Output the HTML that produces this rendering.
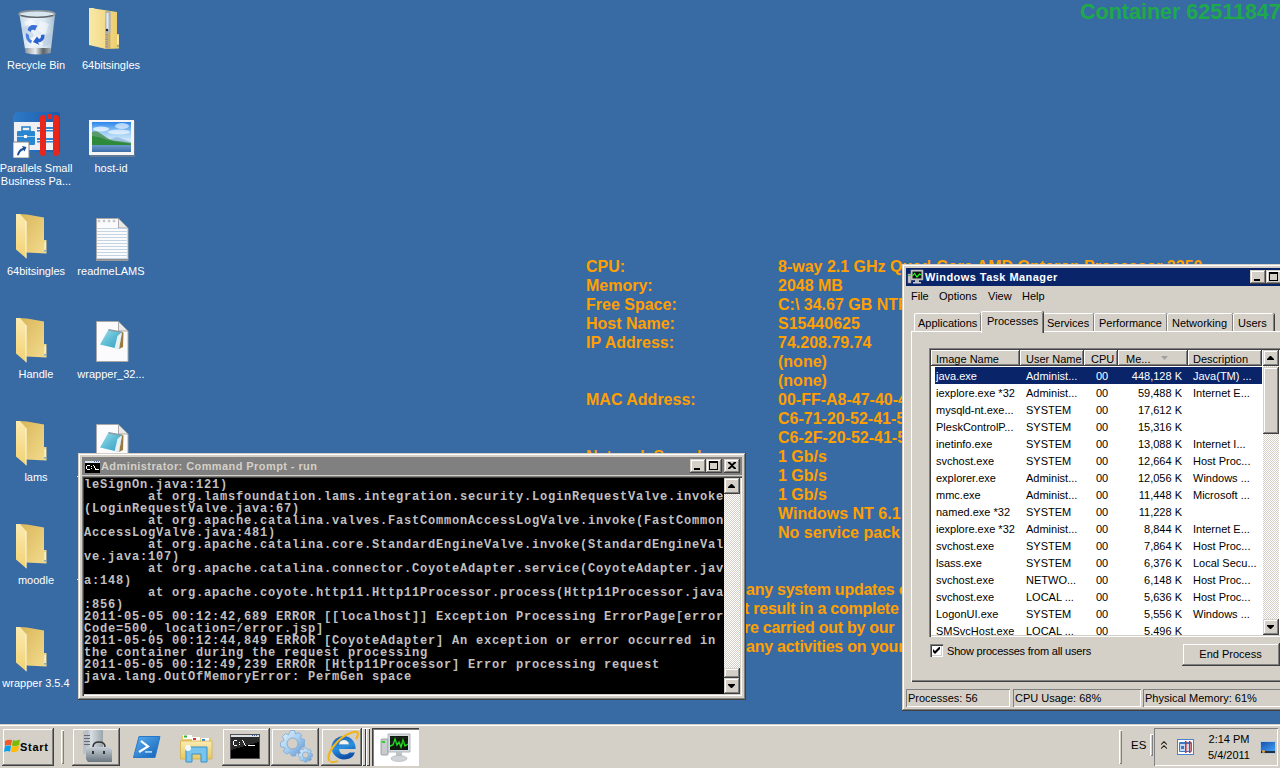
<!DOCTYPE html><html><head><meta charset="utf-8"><style>
*{margin:0;padding:0;box-sizing:border-box}
html,body{width:1280px;height:768px;overflow:hidden}
body{position:relative;background:#386AA4;font-family:"Liberation Sans",sans-serif;font-size:11px;color:#000}
.abs{position:absolute}
.lbl{position:absolute;color:#fff;font-size:11px;line-height:13px;text-align:center;white-space:nowrap}
.bg{position:absolute;color:#FFA000;font-weight:bold;font-size:16px;line-height:19px;white-space:pre}
.con{position:absolute;font-family:"Liberation Mono",monospace;font-weight:bold;font-size:12px;letter-spacing:0.8px;line-height:12px;color:#C0C0C0;white-space:pre}
.raised{background:#D4D0C8;box-shadow:inset -1px -1px #404040,inset 1px 1px #fff,inset -2px -2px #808080}
.raised2{background:#D4D0C8;box-shadow:inset -1px -1px #404040,inset 1px 1px #D4D0C8,inset -2px -2px #808080,inset 2px 2px #fff}
.sunk{box-shadow:inset 1px 1px #808080,inset -1px -1px #fff}
.t{position:absolute;white-space:nowrap;font-size:11px;line-height:13px}
</style></head><body>

<div class="abs" style="left:1080px;top:0px;color:#1EAA4A;font-weight:bold;font-size:21.5px;line-height:24px;white-space:nowrap">Container 62511847</div>
<div class="bg" style="left:586px;top:257px">CPU:</div>
<div class="bg" style="left:778px;top:257px">8-way 2.1 GHz Quad-Core AMD Opteron Processor 2350</div>
<div class="bg" style="left:586px;top:276px">Memory:</div>
<div class="bg" style="left:778px;top:276px">2048 MB</div>
<div class="bg" style="left:586px;top:295px">Free Space:</div>
<div class="bg" style="left:778px;top:295px">C:\ 34.67 GB NTFS</div>
<div class="bg" style="left:586px;top:314px">Host Name:</div>
<div class="bg" style="left:778px;top:314px">S15440625</div>
<div class="bg" style="left:586px;top:333px">IP Address:</div>
<div class="bg" style="left:778px;top:333px">74.208.79.74</div>
<div class="bg" style="left:778px;top:352px">(none)</div>
<div class="bg" style="left:778px;top:371px">(none)</div>
<div class="bg" style="left:586px;top:390px">MAC Address:</div>
<div class="bg" style="left:778px;top:390px">00-FF-A8-47-40-4F</div>
<div class="bg" style="left:778px;top:409px">C6-71-20-52-41-53</div>
<div class="bg" style="left:778px;top:428px">C6-2F-20-52-41-53</div>
<div class="bg" style="left:586px;top:447px">Network Speed:</div>
<div class="bg" style="left:778px;top:447px">1 Gb/s</div>
<div class="bg" style="left:778px;top:466px">1 Gb/s</div>
<div class="bg" style="left:778px;top:485px">1 Gb/s</div>
<div class="bg" style="left:586px;top:504px">OS Version:</div>
<div class="bg" style="left:778px;top:504px">Windows NT 6.1</div>
<div class="bg" style="left:586px;top:523px">Service Pack:</div>
<div class="bg" style="left:778px;top:523px">No service pack</div>
<div class="bg" style="left:746px;top:580px;letter-spacing:-0.25px">any system updates or patches</div>
<div class="bg" style="left:744px;top:599px;letter-spacing:-0.25px">t result in a complete failure</div>
<div class="bg" style="left:744px;top:618px;letter-spacing:-0.25px">re carried out by our</div>
<div class="bg" style="left:746px;top:637px;letter-spacing:-0.25px">any activities on your server</div>
<div class="lbl" style="left:-4px;width:80px;top:59px">Recycle Bin</div>
<div class="lbl" style="left:71px;width:80px;top:59px">64bitsingles</div>
<div class="lbl" style="left:-4px;width:80px;top:162px">Parallels Small<br>Business Pa...</div>
<div class="lbl" style="left:71px;width:80px;top:162px">host-id</div>
<div class="lbl" style="left:-4px;width:80px;top:265px">64bitsingles</div>
<div class="lbl" style="left:71px;width:80px;top:265px">readmeLAMS</div>
<div class="lbl" style="left:-4px;width:80px;top:368px">Handle</div>
<div class="lbl" style="left:71px;width:80px;top:368px">wrapper_32...</div>
<div class="lbl" style="left:-4px;width:80px;top:471px">lams</div>
<div class="lbl" style="left:71px;width:80px;top:471px">wrapper</div>
<div class="lbl" style="left:-4px;width:80px;top:574px">moodle</div>
<div class="lbl" style="left:-4px;width:80px;top:677px">wrapper 3.5.4</div>
<div class="abs" style="left:77px;top:476px;width:1px;height:1px;background:#fff"></div><div class="abs" style="left:77px;top:579px;width:1px;height:1px;background:#fff"></div>
<svg class="abs" style="left:16px;top:213px" width="32" height="46" viewBox="0 0 32 46">
<defs><linearGradient id="fb16213" x1="0" y1="0" x2="1" y2="1"><stop offset="0" stop-color="#D9B65A"/><stop offset="1" stop-color="#F3DC8E"/></linearGradient>
<linearGradient id="ff16213" x1="0" y1="0" x2="0" y2="1"><stop offset="0" stop-color="#FBEBB0"/><stop offset="1" stop-color="#F2D272"/></linearGradient></defs>
<path d="M4 1 L11 1.5 L28 4.5 L28 27 L30.5 27 L30.5 40.5 L10 39.5 Z" fill="url(#fb16213)"/>
<rect x="28.5" y="29" width="1.2" height="9" fill="#fff" opacity="0.8"/><rect x="28.3" y="37" width="1.5" height="1.5" fill="#4A9AE8"/>
<path d="M0 1 L4 1 L10.5 8.5 L10.5 45.5 L0 36.5 Z" fill="url(#ff16213)"/><path d="M9.5 8 L10.5 8.5 L10.5 45.5 L9.5 45z" fill="#fff" opacity="0.7"/></svg>
<svg class="abs" style="left:16px;top:317px" width="32" height="46" viewBox="0 0 32 46">
<defs><linearGradient id="fb16317" x1="0" y1="0" x2="1" y2="1"><stop offset="0" stop-color="#D9B65A"/><stop offset="1" stop-color="#F3DC8E"/></linearGradient>
<linearGradient id="ff16317" x1="0" y1="0" x2="0" y2="1"><stop offset="0" stop-color="#FBEBB0"/><stop offset="1" stop-color="#F2D272"/></linearGradient></defs>
<path d="M4 1 L11 1.5 L28 4.5 L28 27 L30.5 27 L30.5 40.5 L10 39.5 Z" fill="url(#fb16317)"/>
<rect x="28.5" y="29" width="1.2" height="9" fill="#fff" opacity="0.8"/><rect x="28.3" y="37" width="1.5" height="1.5" fill="#4A9AE8"/>
<path d="M0 1 L4 1 L10.5 8.5 L10.5 45.5 L0 36.5 Z" fill="url(#ff16317)"/><path d="M9.5 8 L10.5 8.5 L10.5 45.5 L9.5 45z" fill="#fff" opacity="0.7"/></svg>
<svg class="abs" style="left:16px;top:420px" width="32" height="46" viewBox="0 0 32 46">
<defs><linearGradient id="fb16420" x1="0" y1="0" x2="1" y2="1"><stop offset="0" stop-color="#D9B65A"/><stop offset="1" stop-color="#F3DC8E"/></linearGradient>
<linearGradient id="ff16420" x1="0" y1="0" x2="0" y2="1"><stop offset="0" stop-color="#FBEBB0"/><stop offset="1" stop-color="#F2D272"/></linearGradient></defs>
<path d="M4 1 L11 1.5 L28 4.5 L28 27 L30.5 27 L30.5 40.5 L10 39.5 Z" fill="url(#fb16420)"/>
<rect x="28.5" y="29" width="1.2" height="9" fill="#fff" opacity="0.8"/><rect x="28.3" y="37" width="1.5" height="1.5" fill="#4A9AE8"/>
<path d="M0 1 L4 1 L10.5 8.5 L10.5 45.5 L0 36.5 Z" fill="url(#ff16420)"/><path d="M9.5 8 L10.5 8.5 L10.5 45.5 L9.5 45z" fill="#fff" opacity="0.7"/></svg>
<svg class="abs" style="left:16px;top:523px" width="32" height="46" viewBox="0 0 32 46">
<defs><linearGradient id="fb16523" x1="0" y1="0" x2="1" y2="1"><stop offset="0" stop-color="#D9B65A"/><stop offset="1" stop-color="#F3DC8E"/></linearGradient>
<linearGradient id="ff16523" x1="0" y1="0" x2="0" y2="1"><stop offset="0" stop-color="#FBEBB0"/><stop offset="1" stop-color="#F2D272"/></linearGradient></defs>
<path d="M4 1 L11 1.5 L28 4.5 L28 27 L30.5 27 L30.5 40.5 L10 39.5 Z" fill="url(#fb16523)"/>
<rect x="28.5" y="29" width="1.2" height="9" fill="#fff" opacity="0.8"/><rect x="28.3" y="37" width="1.5" height="1.5" fill="#4A9AE8"/>
<path d="M0 1 L4 1 L10.5 8.5 L10.5 45.5 L0 36.5 Z" fill="url(#ff16523)"/><path d="M9.5 8 L10.5 8.5 L10.5 45.5 L9.5 45z" fill="#fff" opacity="0.7"/></svg>
<svg class="abs" style="left:16px;top:626px" width="32" height="46" viewBox="0 0 32 46">
<defs><linearGradient id="fb16626" x1="0" y1="0" x2="1" y2="1"><stop offset="0" stop-color="#D9B65A"/><stop offset="1" stop-color="#F3DC8E"/></linearGradient>
<linearGradient id="ff16626" x1="0" y1="0" x2="0" y2="1"><stop offset="0" stop-color="#FBEBB0"/><stop offset="1" stop-color="#F2D272"/></linearGradient></defs>
<path d="M4 1 L11 1.5 L28 4.5 L28 27 L30.5 27 L30.5 40.5 L10 39.5 Z" fill="url(#fb16626)"/>
<rect x="28.5" y="29" width="1.2" height="9" fill="#fff" opacity="0.8"/><rect x="28.3" y="37" width="1.5" height="1.5" fill="#4A9AE8"/>
<path d="M0 1 L4 1 L10.5 8.5 L10.5 45.5 L0 36.5 Z" fill="url(#ff16626)"/><path d="M9.5 8 L10.5 8.5 L10.5 45.5 L9.5 45z" fill="#fff" opacity="0.7"/></svg>
<svg class="abs" style="left:89px;top:8px" width="31" height="42" viewBox="0 0 31 42">
<defs><linearGradient id="zf" x1="0" y1="0" x2="1" y2="0"><stop offset="0" stop-color="#F8E8A8"/><stop offset="0.5" stop-color="#F5DC8C"/><stop offset="1" stop-color="#EBCB6A"/></linearGradient></defs>
<path d="M0 0 L5 0 L5 0.5 L28 4 L28 26 L30 26 L30 40.5 L17 41 L0 37z" fill="url(#zf)"/>
<rect x="16.5" y="3" width="5" height="38" fill="#C9B070"/>
<path d="M17.5 14 v26" stroke="#8F949A" stroke-width="2.5" stroke-dasharray="1.2 1.2"/>
<path d="M16.5 4 h5 v20 q-2.5 3 -5 0z" fill="#AAB4C0"/><path d="M17.5 5 h2 v17 h-2z" fill="#E4EAF0"/><circle cx="18" cy="22" r="1.2" fill="#222"/>
<rect x="28.3" y="27.5" width="1.2" height="9" fill="#fff" opacity="0.8"/><rect x="28" y="37" width="1.6" height="1.6" fill="#4A9AE8"/></svg>
<svg class="abs" style="left:18px;top:8px" width="39" height="47" viewBox="0 0 39 47">
<defs><linearGradient id="rb" x1="0" y1="0" x2="1" y2="0"><stop offset="0" stop-color="#C4D6E6"/><stop offset="0.3" stop-color="#EEF4FA"/><stop offset="0.7" stop-color="#DCE8F2"/><stop offset="1" stop-color="#A8BED2"/></linearGradient>
<linearGradient id="rbb" x1="0" y1="0" x2="1" y2="0"><stop offset="0" stop-color="#9098A0"/><stop offset="0.4" stop-color="#E8ECEE"/><stop offset="0.7" stop-color="#5A6268"/><stop offset="1" stop-color="#A8B0B6"/></linearGradient></defs>
<path d="M1.5 7 L37 7 L33 41 L7 41z" fill="url(#rb)"/>
<path d="M6 14 L14 11 L20 19 L12 24z M22 13 L31 16 L27 27 L19 22z M12 30 L22 27 L26 37 L14 38z" fill="#FFFFFF" opacity="0.45"/>
<path d="M4 20 L10 17 L16 28 L9 33z M24 28 L33 25 L32 36 L25 39z" fill="#B0C6DA" opacity="0.5"/>
<path d="M7 40 L33 40 L32.5 45 Q20 48 7.5 45z" fill="url(#rbb)"/>
<ellipse cx="19" cy="6" rx="18" ry="3.2" fill="#D8E6F0" stroke="#8C949A" stroke-width="1.6"/>
<path d="M3 7.5 Q19 11.5 35 7.5" stroke="#5A6066" stroke-width="1.2" fill="none"/>
<path d="M9.5 22 Q11 16.5 16 17 L19.5 17.5 L17 22.5 Q13.5 20.5 12.5 24z" fill="#3A70D8"/>
<path d="M8 25 L11 27 Q10.5 31 14 32.5 L13 35.5 Q6.5 32 8 25z" fill="#4A80E0"/>
<path d="M15 34 L19 28.5 L21 31 Q23.5 30 23 27 L26.5 26.5 Q27 33.5 20 34.5 L21.5 37z" fill="#2A60D0"/></svg>
<svg class="abs" style="left:13px;top:112px" width="48" height="46" viewBox="0 0 48 46">
<defs><linearGradient id="pt" x1="0" y1="0" x2="1" y2="0"><stop offset="0" stop-color="#2E7AC8"/><stop offset="1" stop-color="#1C5CAA"/></linearGradient></defs>
<path d="M2 2 Q2 0 4 0 L45 0 Q47 0 47 2 L47 40 L0 40 L0 4z" fill="url(#pt)"/>
<rect x="1" y="10" width="45" height="28" fill="#F0F0F4"/>
<rect x="4" y="19" width="18" height="14" rx="1" fill="#2A86D0"/><rect x="9" y="15" width="8" height="4" fill="none" stroke="#2A86D0" stroke-width="1.6"/>
<rect x="11" y="23" width="3" height="3" fill="#fff"/><rect x="4" y="24" width="18" height="1" fill="#fff" opacity="0.6"/>
<rect x="24" y="15" width="22" height="2" fill="#2A86D0"/><rect x="24" y="18" width="22" height="1.5" fill="#2A86D0"/><rect x="24" y="26" width="22" height="2" fill="#2A86D0"/><rect x="24" y="29" width="22" height="1.5" fill="#2A86D0"/>
<rect x="27" y="3" width="6" height="41" rx="3" fill="#E8261C"/><rect x="40" y="3" width="6" height="41" rx="3" fill="#E8261C"/><rect x="34.5" y="2" width="4.5" height="5" fill="#E8261C"/>
<rect x="0" y="30" width="16" height="16" fill="#fff" stroke="#888" stroke-width="1"/><path d="M4 13.5 Q5 7 10 6 L9 4 L13.5 5 L11.5 9.5 L10.5 8 Q7 9 6 13z" transform="translate(0,30)" fill="#1A4E9A"/></svg>
<svg class="abs" style="left:89px;top:120px" width="46" height="37" viewBox="0 0 46 37">
<defs><linearGradient id="sky" x1="0" y1="0" x2="0" y2="1"><stop offset="0" stop-color="#2A86EC"/><stop offset="0.35" stop-color="#9CCCF4"/><stop offset="0.7" stop-color="#E4F2FC"/></linearGradient>
<linearGradient id="sea" x1="0" y1="0" x2="0" y2="1"><stop offset="0" stop-color="#6A98CC"/><stop offset="1" stop-color="#3E6EA8"/></linearGradient></defs>
<rect x="1" y="1" width="45" height="36" fill="#8A8A8A" opacity="0.5"/>
<rect x="0" y="0" width="45" height="35" fill="#F6F4F4"/>
<rect x="3" y="2" width="39" height="30" fill="url(#sky)"/>
<ellipse cx="12" cy="9" rx="8" ry="2.5" fill="#fff" opacity="0.7"/><ellipse cx="33" cy="6" rx="7" ry="3" fill="#fff" opacity="0.6"/><ellipse cx="30" cy="12" rx="11" ry="2.5" fill="#fff" opacity="0.6"/>
<path d="M22 19 L28 17 L36 20 L42 22 L42 25 L22 25z" fill="#9CC0E0"/>
<path d="M3 12 Q7 10.5 9 12 Q14 15 19 18.5 L24 20.5 Q32 21 42 23 L42 25.5 L3 25.5z" fill="#5A9A6A"/>
<path d="M3 16 Q12 17 18 20 Q30 22 42 23.5 L42 25.5 L3 25.5z" fill="#2E8A3A"/>
<rect x="3" y="25" width="39" height="7" fill="url(#sea)"/></svg>
<svg class="abs" style="left:96px;top:218px" width="33" height="43" viewBox="0 0 33 43"><path d="M0.5 0.5 L22.5 0.5 L32 10 L32 42.5 L0.5 42.5z" fill="#FBFBFD" stroke="#A8A8A8" stroke-width="1"/><path d="M22.5 0.5 L22.5 10 L32 10z" fill="#E8E8E8" stroke="#999" stroke-width="0.8"/><rect x="1" y="10" width="30.5" height="1" fill="#C4D4E2"/><rect x="1" y="13" width="30.5" height="1" fill="#C4D4E2"/><rect x="1" y="16" width="30.5" height="1" fill="#C4D4E2"/><rect x="1" y="19" width="30.5" height="1" fill="#C4D4E2"/><rect x="1" y="22" width="30.5" height="1" fill="#C4D4E2"/><rect x="1" y="25" width="30.5" height="1" fill="#C4D4E2"/><rect x="1" y="28" width="30.5" height="1" fill="#C4D4E2"/><rect x="1" y="31" width="30.5" height="1" fill="#C4D4E2"/><rect x="1" y="34" width="30.5" height="1" fill="#C4D4E2"/><rect x="1" y="37" width="30.5" height="1" fill="#C4D4E2"/><rect x="1" y="40" width="30.5" height="1" fill="#C4D4E2"/><rect x="0.5" y="41" width="31.5" height="1.5" fill="#909090"/><circle cx="3" cy="3" r="1" fill="none" stroke="#999" stroke-width="0.6"/><circle cx="8" cy="3" r="1" fill="none" stroke="#999" stroke-width="0.6"/><circle cx="13" cy="3" r="1" fill="none" stroke="#999" stroke-width="0.6"/><circle cx="18" cy="3" r="1" fill="none" stroke="#999" stroke-width="0.6"/></svg>
<svg class="abs" style="left:96px;top:321px" width="33" height="41" viewBox="0 0 33 41"><path d="M0.5 0.5 L22.5 0.5 L32 10 L32 40.5 L0.5 40.5z" fill="#FBFBFD" stroke="#A8A8A8" stroke-width="1"/><path d="M22.5 0.5 L22.5 10 L32 10z" fill="#E8E8E8" stroke="#999" stroke-width="0.8"/><defs><linearGradient id="pd96321" x1="0" y1="0" x2="1" y2="1"><stop offset="0" stop-color="#A8E0EC"/><stop offset="0.5" stop-color="#5CBCD4"/><stop offset="1" stop-color="#3A9CC0"/></linearGradient></defs><path d="M12.5 8.5 L26 11 L23 28 L4 23.5z" fill="url(#pd96321)"/><path d="M26 11 L27.5 11.5 L27 26 L23 28z" fill="#9C7A3C"/><path d="M21.5 15 L26 11 L23 28 L18.5 27.5z" fill="#E8F0F4"/><path d="M12.5 8 L26 10.5 L26 12 L12.5 9.5z" fill="#8A9AA0"/></svg>
<svg class="abs" style="left:96px;top:424px" width="33" height="41" viewBox="0 0 33 41"><path d="M0.5 0.5 L22.5 0.5 L32 10 L32 40.5 L0.5 40.5z" fill="#FBFBFD" stroke="#A8A8A8" stroke-width="1"/><path d="M22.5 0.5 L22.5 10 L32 10z" fill="#E8E8E8" stroke="#999" stroke-width="0.8"/><defs><linearGradient id="pd96424" x1="0" y1="0" x2="1" y2="1"><stop offset="0" stop-color="#A8E0EC"/><stop offset="0.5" stop-color="#5CBCD4"/><stop offset="1" stop-color="#3A9CC0"/></linearGradient></defs><path d="M12.5 8.5 L26 11 L23 28 L4 23.5z" fill="url(#pd96424)"/><path d="M26 11 L27.5 11.5 L27 26 L23 28z" fill="#9C7A3C"/><path d="M21.5 15 L26 11 L23 28 L18.5 27.5z" fill="#E8F0F4"/><path d="M12.5 8 L26 10.5 L26 12 L12.5 9.5z" fill="#8A9AA0"/></svg>
<div class="abs raised2" style="left:78px;top:453px;width:668px;height:247px"></div>
<div class="abs" style="left:82px;top:457px;width:660px;height:18px;background:#808080"></div>
<div class="t" style="left:101px;top:460px;color:#D4D0C8;font-weight:bold;line-height:13px;letter-spacing:0.42px">Administrator: Command Prompt - run</div>
<svg class="abs" style="left:85px;top:461px" width="15" height="12" viewBox="0 0 15 12" shape-rendering="crispEdges">
<rect x="0" y="0" width="15" height="12" fill="#000"/><rect x="0" y="0" width="15" height="2" fill="#D8E2EE"/>
<rect x="9" y="0" width="1" height="1" fill="#5070B0"/><rect x="11" y="0" width="1" height="1" fill="#5070B0"/><rect x="13" y="0" width="1" height="1" fill="#5070B0"/>
<path d="M2 4h3v1H2zM1 5h1v3H1zM2 8h3v1H2zM6 5h1v1H6zM6 7h1v1H6zM8 4h1v1H8zM9 5h1v2H9zM10 7h1v2h-1zM11 8h3v1h-3z" fill="#fff"/></svg>
<div class="abs raised2" style="left:690px;top:459px;width:16px;height:14px"><div class="abs" style="left:4px;top:9px;width:6px;height:2px;background:#000"></div></div>
<div class="abs raised2" style="left:706px;top:459px;width:16px;height:14px"><div class="abs" style="left:3px;top:2px;width:9px;height:9px;border:1px solid #000;border-top-width:2px"></div></div>
<div class="abs raised2" style="left:724px;top:459px;width:16px;height:14px"><svg class="abs" style="left:4px;top:3px" width="8" height="7" viewBox="0 0 8 7"><path d="M0 0h2l2 2 2-2h2v1L5 3.5 8 6v1H6L4 5 2 7H0V6l3-2.5L0 1z" fill="#000"/></svg></div>
<div class="abs" style="left:82px;top:476px;width:660px;height:220px;box-shadow:inset 1px 1px #808080,inset 2px 2px #404040,inset -1px -1px #fff,inset -2px -2px #D4D0C8;background:#000"></div>
<div class="abs" style="left:84px;top:478px;width:640px;height:216px;overflow:hidden">
<div class="con" style="left:0;top:1px">leSignOn.java:121)
        at org.lamsfoundation.lams.integration.security.LoginRequestValve.invoke
(LoginRequestValve.java:67)
        at org.apache.catalina.valves.FastCommonAccessLogValve.invoke(FastCommon
AccessLogValve.java:481)
        at org.apache.catalina.core.StandardEngineValve.invoke(StandardEngineVal
ve.java:107)
        at org.apache.catalina.connector.CoyoteAdapter.service(CoyoteAdapter.jav
a:148)
        at org.apache.coyote.http11.Http11Processor.process(Http11Processor.java
:856)
2011-05-05 00:12:42,689 ERROR [[localhost]] Exception Processing ErrorPage[error
Code=500, location=/error.jsp]
2011-05-05 00:12:44,849 ERROR [CoyoteAdapter] An exception or error occurred in
the container during the request processing
2011-05-05 00:12:49,239 ERROR [Http11Processor] Error processing request
java.lang.OutOfMemoryError: PermGen space</div></div>
<div class="abs" style="left:724px;top:478px;width:16px;height:216px;background-color:#fff;background-image:linear-gradient(45deg,#D4D0C8 25%,transparent 25%,transparent 75%,#D4D0C8 75%),linear-gradient(45deg,#D4D0C8 25%,transparent 25%,transparent 75%,#D4D0C8 75%);background-size:2px 2px;background-position:0 0,1px 1px"></div><div class="abs raised2" style="left:724px;top:478px;width:16px;height:16px"><svg class="abs" style="left:4px;top:6px" width="7" height="4" viewBox="0 0 7 4"><path d="M3 0h1l3 3v1H0V3z" fill="#000"/></svg></div><div class="abs raised2" style="left:724px;top:678px;width:16px;height:16px"><svg class="abs" style="left:4px;top:6px" width="7" height="4" viewBox="0 0 7 4"><path d="M0 0h7v1L4 4H3L0 1z" fill="#000"/></svg></div><div class="abs raised2" style="left:724px;top:668px;width:16px;height:10px"></div>
<div class="abs raised2" style="left:902px;top:264px;width:390px;height:447px"></div>
<div class="abs" style="left:906px;top:268px;width:380px;height:18px;background:#0A246A"></div>
<div class="t" style="left:925px;top:271px;color:#fff;font-weight:bold;letter-spacing:0.45px">Windows Task Manager</div>
<svg class="abs" style="left:907px;top:269px" width="17" height="16" viewBox="0 0 17 16">
<rect x="1" y="5" width="3" height="9" fill="#C8C8C8" stroke="#888" stroke-width="0.5"/><rect x="1.5" y="6" width="2" height="1" fill="#3c3"/>
<rect x="4" y="1" width="12" height="10" fill="#D0D0D0" stroke="#999" stroke-width="0.6"/><rect x="5.5" y="2.5" width="9" height="7" fill="#111"/>
<path d="M5.5 7 L7.5 4.5 L10 8 L12.5 5 L14.5 6" stroke="#2f2" stroke-width="1.2" fill="none"/>
<rect x="8" y="11" width="4" height="2" fill="#bbb"/><rect x="6" y="13" width="8" height="1.5" fill="#ccc"/></svg>
<div class="abs raised2" style="left:1250px;top:270px;width:16px;height:14px"><div class="abs" style="left:4px;top:9px;width:6px;height:2px;background:#000"></div></div>
<div class="abs raised2" style="left:1266px;top:270px;width:16px;height:14px"><div class="abs" style="left:3px;top:2px;width:9px;height:9px;border:1px solid #000;border-top-width:2px"></div></div>
<div class="t" style="left:911px;top:290px">File</div>
<div class="t" style="left:939px;top:290px">Options</div>
<div class="t" style="left:988px;top:290px">View</div>
<div class="t" style="left:1022px;top:290px">Help</div>
<div class="abs" style="left:911px;top:331px;width:380px;height:351px;box-shadow:inset 1px 1px #fff,inset -1px -1px #404040,inset -2px -2px #808080"></div>
<div class="abs" style="left:914px;top:313px;width:67px;height:18px;background:#D4D0C8;border-left:1px solid #fff;border-top:1px solid #fff;box-shadow:inset -1px 0 #808080,1px 0 #404040;border-radius:2px 2px 0 0"></div>
<div class="t" style="left:918px;top:317px">Applications</div>
<div class="abs" style="left:1043px;top:313px;width:51px;height:18px;background:#D4D0C8;border-left:1px solid #fff;border-top:1px solid #fff;box-shadow:inset -1px 0 #808080,1px 0 #404040;border-radius:2px 2px 0 0"></div>
<div class="t" style="left:1047px;top:317px">Services</div>
<div class="abs" style="left:1094px;top:313px;width:73px;height:18px;background:#D4D0C8;border-left:1px solid #fff;border-top:1px solid #fff;box-shadow:inset -1px 0 #808080,1px 0 #404040;border-radius:2px 2px 0 0"></div>
<div class="t" style="left:1099px;top:317px">Performance</div>
<div class="abs" style="left:1167px;top:313px;width:66px;height:18px;background:#D4D0C8;border-left:1px solid #fff;border-top:1px solid #fff;box-shadow:inset -1px 0 #808080,1px 0 #404040;border-radius:2px 2px 0 0"></div>
<div class="t" style="left:1172px;top:317px">Networking</div>
<div class="abs" style="left:1233px;top:313px;width:41px;height:18px;background:#D4D0C8;border-left:1px solid #fff;border-top:1px solid #fff;box-shadow:inset -1px 0 #808080,1px 0 #404040;border-radius:2px 2px 0 0"></div>
<div class="t" style="left:1238px;top:317px">Users</div>
<div class="abs" style="left:981px;top:311px;width:62px;height:22px;background:#D4D0C8;border-left:1px solid #fff;border-top:1px solid #fff;box-shadow:inset -1px 0 #808080,1px 0 #404040;border-radius:2px 2px 0 0"></div>
<div class="t" style="left:987px;top:315px">Processes</div>
<div class="abs" style="left:929px;top:348px;width:360px;height:289px;background:#fff;box-shadow:inset 1px 1px #808080,inset 2px 2px #404040,inset -1px -1px #fff,inset -2px -2px #D4D0C8"></div>
<div class="abs raised" style="left:931px;top:350px;width:89px;height:16px"></div>
<div class="t" style="left:936px;top:353px">Image Name</div>
<div class="abs raised" style="left:1020px;top:350px;width:64px;height:16px"></div>
<div class="t" style="left:1026px;top:353px">User Name</div>
<div class="abs raised" style="left:1084px;top:350px;width:34px;height:16px"></div>
<div class="t" style="left:1091px;top:353px">CPU</div>
<div class="abs raised" style="left:1118px;top:350px;width:70px;height:16px"></div>
<div class="t" style="left:1126px;top:353px">Me...</div>
<div class="abs raised" style="left:1188px;top:350px;width:74px;height:16px"></div>
<div class="t" style="left:1193px;top:353px">Description</div>
<svg class="abs" style="left:1161px;top:356px" width="7" height="4" viewBox="0 0 7 4"><path d="M0 0h7L3.5 4z" fill="#A0A0A0"/></svg>
<div class="abs" style="left:932px;top:367px;width:330px;height:268px;overflow:hidden">
<div class="abs" style="left:3px;top:0px;width:327px;height:17px;background:#0A246A"></div>
<div class="t" style="left:4px;top:3px;color:#fff">java.exe</div>
<div class="t" style="left:94px;top:3px;color:#fff">Administ...</div>
<div class="t" style="left:164px;top:3px;color:#fff">00</div>
<div class="t" style="left:180px;width:70px;text-align:right;top:3px;color:#fff">448,128 K</div>
<div class="t" style="left:261px;top:3px;color:#fff">Java(TM) ...</div>
<div class="t" style="left:4px;top:20px;color:#000">iexplore.exe *32</div>
<div class="t" style="left:94px;top:20px;color:#000">Administ...</div>
<div class="t" style="left:164px;top:20px;color:#000">00</div>
<div class="t" style="left:180px;width:70px;text-align:right;top:20px;color:#000">59,488 K</div>
<div class="t" style="left:261px;top:20px;color:#000">Internet E...</div>
<div class="t" style="left:4px;top:37px;color:#000">mysqld-nt.exe...</div>
<div class="t" style="left:94px;top:37px;color:#000">SYSTEM</div>
<div class="t" style="left:164px;top:37px;color:#000">00</div>
<div class="t" style="left:180px;width:70px;text-align:right;top:37px;color:#000">17,612 K</div>
<div class="t" style="left:261px;top:37px;color:#000"></div>
<div class="t" style="left:4px;top:54px;color:#000">PleskControlP...</div>
<div class="t" style="left:94px;top:54px;color:#000">SYSTEM</div>
<div class="t" style="left:164px;top:54px;color:#000">00</div>
<div class="t" style="left:180px;width:70px;text-align:right;top:54px;color:#000">15,316 K</div>
<div class="t" style="left:261px;top:54px;color:#000"></div>
<div class="t" style="left:4px;top:71px;color:#000">inetinfo.exe</div>
<div class="t" style="left:94px;top:71px;color:#000">SYSTEM</div>
<div class="t" style="left:164px;top:71px;color:#000">00</div>
<div class="t" style="left:180px;width:70px;text-align:right;top:71px;color:#000">13,088 K</div>
<div class="t" style="left:261px;top:71px;color:#000">Internet I...</div>
<div class="t" style="left:4px;top:88px;color:#000">svchost.exe</div>
<div class="t" style="left:94px;top:88px;color:#000">SYSTEM</div>
<div class="t" style="left:164px;top:88px;color:#000">00</div>
<div class="t" style="left:180px;width:70px;text-align:right;top:88px;color:#000">12,664 K</div>
<div class="t" style="left:261px;top:88px;color:#000">Host Proc...</div>
<div class="t" style="left:4px;top:105px;color:#000">explorer.exe</div>
<div class="t" style="left:94px;top:105px;color:#000">Administ...</div>
<div class="t" style="left:164px;top:105px;color:#000">00</div>
<div class="t" style="left:180px;width:70px;text-align:right;top:105px;color:#000">12,056 K</div>
<div class="t" style="left:261px;top:105px;color:#000">Windows ...</div>
<div class="t" style="left:4px;top:122px;color:#000">mmc.exe</div>
<div class="t" style="left:94px;top:122px;color:#000">Administ...</div>
<div class="t" style="left:164px;top:122px;color:#000">00</div>
<div class="t" style="left:180px;width:70px;text-align:right;top:122px;color:#000">11,448 K</div>
<div class="t" style="left:261px;top:122px;color:#000">Microsoft ...</div>
<div class="t" style="left:4px;top:139px;color:#000">named.exe *32</div>
<div class="t" style="left:94px;top:139px;color:#000">SYSTEM</div>
<div class="t" style="left:164px;top:139px;color:#000">00</div>
<div class="t" style="left:180px;width:70px;text-align:right;top:139px;color:#000">11,228 K</div>
<div class="t" style="left:261px;top:139px;color:#000"></div>
<div class="t" style="left:4px;top:156px;color:#000">iexplore.exe *32</div>
<div class="t" style="left:94px;top:156px;color:#000">Administ...</div>
<div class="t" style="left:164px;top:156px;color:#000">00</div>
<div class="t" style="left:180px;width:70px;text-align:right;top:156px;color:#000">8,844 K</div>
<div class="t" style="left:261px;top:156px;color:#000">Internet E...</div>
<div class="t" style="left:4px;top:173px;color:#000">svchost.exe</div>
<div class="t" style="left:94px;top:173px;color:#000">SYSTEM</div>
<div class="t" style="left:164px;top:173px;color:#000">00</div>
<div class="t" style="left:180px;width:70px;text-align:right;top:173px;color:#000">7,864 K</div>
<div class="t" style="left:261px;top:173px;color:#000">Host Proc...</div>
<div class="t" style="left:4px;top:190px;color:#000">lsass.exe</div>
<div class="t" style="left:94px;top:190px;color:#000">SYSTEM</div>
<div class="t" style="left:164px;top:190px;color:#000">00</div>
<div class="t" style="left:180px;width:70px;text-align:right;top:190px;color:#000">6,376 K</div>
<div class="t" style="left:261px;top:190px;color:#000">Local Secu...</div>
<div class="t" style="left:4px;top:207px;color:#000">svchost.exe</div>
<div class="t" style="left:94px;top:207px;color:#000">NETWO...</div>
<div class="t" style="left:164px;top:207px;color:#000">00</div>
<div class="t" style="left:180px;width:70px;text-align:right;top:207px;color:#000">6,148 K</div>
<div class="t" style="left:261px;top:207px;color:#000">Host Proc...</div>
<div class="t" style="left:4px;top:224px;color:#000">svchost.exe</div>
<div class="t" style="left:94px;top:224px;color:#000">LOCAL ...</div>
<div class="t" style="left:164px;top:224px;color:#000">00</div>
<div class="t" style="left:180px;width:70px;text-align:right;top:224px;color:#000">5,636 K</div>
<div class="t" style="left:261px;top:224px;color:#000">Host Proc...</div>
<div class="t" style="left:4px;top:241px;color:#000">LogonUI.exe</div>
<div class="t" style="left:94px;top:241px;color:#000">SYSTEM</div>
<div class="t" style="left:164px;top:241px;color:#000">00</div>
<div class="t" style="left:180px;width:70px;text-align:right;top:241px;color:#000">5,556 K</div>
<div class="t" style="left:261px;top:241px;color:#000">Windows ...</div>
<div class="t" style="left:4px;top:258px;color:#000">SMSvcHost.exe</div>
<div class="t" style="left:94px;top:258px;color:#000">LOCAL ...</div>
<div class="t" style="left:164px;top:258px;color:#000">00</div>
<div class="t" style="left:180px;width:70px;text-align:right;top:258px;color:#000">5,496 K</div>
<div class="t" style="left:261px;top:258px;color:#000"></div>
</div>
<div class="abs" style="left:1263px;top:350px;width:16px;height:285px;background-color:#fff;background-image:linear-gradient(45deg,#D4D0C8 25%,transparent 25%,transparent 75%,#D4D0C8 75%),linear-gradient(45deg,#D4D0C8 25%,transparent 25%,transparent 75%,#D4D0C8 75%);background-size:2px 2px;background-position:0 0,1px 1px"></div><div class="abs raised2" style="left:1263px;top:350px;width:16px;height:16px"><svg class="abs" style="left:4px;top:6px" width="7" height="4" viewBox="0 0 7 4"><path d="M3 0h1l3 3v1H0V3z" fill="#000"/></svg></div><div class="abs raised2" style="left:1263px;top:619px;width:16px;height:16px"><svg class="abs" style="left:4px;top:6px" width="7" height="4" viewBox="0 0 7 4"><path d="M0 0h7v1L4 4H3L0 1z" fill="#000"/></svg></div><div class="abs raised2" style="left:1263px;top:367px;width:16px;height:67px"></div>
<div class="abs" style="left:930px;top:644px;width:13px;height:13px;background:#fff;box-shadow:inset 1px 1px #808080,inset 2px 2px #404040,inset -1px -1px #fff,inset -2px -2px #D4D0C8"></div>
<svg class="abs" style="left:933px;top:647px" width="7" height="7" viewBox="0 0 7 7"><path d="M0 2v3l2 2 5-5V-1L2 4z" fill="#000"/></svg>
<div class="t" style="left:947px;top:645px;letter-spacing:-0.2px">Show processes from all users</div>
<div class="abs raised2" style="left:1182px;top:643px;width:98px;height:23px"></div>
<div class="t" style="left:1182px;width:97px;text-align:center;top:648px">End Process</div>
<div class="abs sunk" style="left:906px;top:689px;width:104px;height:18px"></div>
<div class="t" style="left:908px;top:692px">Processes: 56</div>
<div class="abs sunk" style="left:1013px;top:689px;width:128px;height:18px"></div>
<div class="t" style="left:1015px;top:692px">CPU Usage: 68%</div>
<div class="abs sunk" style="left:1143px;top:689px;width:147px;height:18px"></div>
<div class="t" style="left:1145px;top:692px">Physical Memory: 61%</div>
<div class="abs" style="left:0;top:724px;width:1280px;height:44px;background:#D4D0C8;box-shadow:inset 0 1px #D4D0C8,inset 0 2px #fff"></div>
<div class="abs raised2" style="left:2px;top:728px;width:52px;height:38px"></div>
<svg class="abs" style="left:4px;top:738px" width="17" height="16" viewBox="0 0 17 16">
<path d="M1 3 Q4 1 8 2 L7 7.5 Q4 6.5 1 8z" fill="#F05A28"/><path d="M9 2 Q12 3.5 16 1.5 L15 7 Q11 9 8 7.5z" fill="#7CBB00"/>
<path d="M1 8.5 Q4 7 7 8 L6 13.5 Q3 12.5 0 14z" fill="#00A1F1"/><path d="M8 8 Q11 9.5 15 7.5 L14 13 Q10 15 7 13.5z" fill="#FFBB00"/></svg>
<div class="t" style="left:20px;top:741px;font-weight:bold;font-size:11px;letter-spacing:0.7px">Start</div>
<div class="abs" style="left:61px;top:730px;width:3px;height:34px;box-shadow:inset 1px 1px #fff,inset -1px -1px #808080"></div>
<div class="abs raised2" style="left:72px;top:728px;width:48px;height:38px"></div>
<div class="abs raised2" style="left:222px;top:728px;width:48px;height:38px"></div>
<div class="abs raised2" style="left:271px;top:728px;width:48px;height:38px"></div>
<div class="abs raised2" style="left:321px;top:728px;width:41px;height:38px"></div>
<div class="abs" style="left:362px;top:728px;width:4px;height:38px;box-shadow:inset 1px 1px #fff,inset -1px -1px #404040"></div>
<div class="abs" style="left:366px;top:728px;width:4px;height:38px;box-shadow:inset 1px 1px #fff,inset -1px -1px #404040"></div>
<div class="abs" style="left:372px;top:728px;width:47px;height:38px;background:#fff;box-shadow:inset 1px 1px #404040,inset 2px 2px #808080,inset -1px -1px #fff"></div>
<div class="abs" style="left:1119px;top:730px;width:3px;height:34px;box-shadow:inset 1px 1px #fff,inset -1px -1px #808080"></div>
<div class="abs" style="left:1150px;top:734px;width:3px;height:22px;box-shadow:inset 1px 1px #fff,inset -1px -1px #808080"></div>
<div class="t" style="left:1131px;top:739px;font-size:11.5px">ES</div>
<div class="abs" style="left:1154px;top:728px;width:124px;height:38px;box-shadow:inset 1px 1px #808080,inset -1px -1px #fff"></div>
<svg class="abs" style="left:1161px;top:741px" width="6" height="8" viewBox="0 0 6 8"><path d="M0 3l3-3 3 3v1L3 1.5 0 4zM0 7l3-3 3 3v1L3 5.5 0 8z" fill="#000"/></svg>
<div class="t" style="left:1200px;width:58px;text-align:center;top:733px">2:14 PM</div>
<div class="t" style="left:1200px;width:58px;text-align:center;top:749px">5/4/2011</div>
<svg class="abs" style="left:82px;top:730px" width="32" height="34" viewBox="0 0 32 34">
<defs><linearGradient id="srv" x1="0" y1="0" x2="1" y2="0"><stop offset="0" stop-color="#8A949C"/><stop offset="0.4" stop-color="#D8DEE2"/><stop offset="1" stop-color="#9AA4AC"/></linearGradient>
<linearGradient id="tbx" x1="0" y1="0" x2="0" y2="1"><stop offset="0" stop-color="#C8D0D8"/><stop offset="1" stop-color="#6A7680"/></linearGradient></defs>
<path d="M1 2 L5 0 L21 0 L21 22 L1 24z" fill="url(#srv)"/><path d="M1 2 L5 0 L5 24 L1 24z" fill="#B8C0C8"/>
<rect x="2" y="5" width="6" height="1" fill="#667"/><rect x="2" y="8" width="6" height="1" fill="#667"/><rect x="2" y="11" width="6" height="1" fill="#667"/><rect x="2" y="14" width="6" height="1" fill="#667"/>
<path d="M4 17 L28 17 L30 20 L30 32 L6 32 L4 29z" fill="url(#tbx)"/><path d="M11 17 Q11 12 17 12 Q23 12 23 17" stroke="#333" stroke-width="1.5" fill="none"/>
<rect x="10" y="21" width="2" height="3" fill="#333"/><rect x="21" y="21" width="2" height="3" fill="#333"/></svg>
<svg class="abs" style="left:133px;top:736px" width="28" height="22" viewBox="0 0 28 22">
<defs><linearGradient id="ps" x1="0" y1="0" x2="1" y2="1"><stop offset="0" stop-color="#5CB0F0"/><stop offset="1" stop-color="#1060B8"/></linearGradient></defs>
<path d="M6 0.5 L27 0.5 L22 21.5 L0.5 21.5z" fill="url(#ps)" stroke="#2878C8" stroke-width="1"/>
<path d="M8 5 L15 10.5 L6 16" stroke="#fff" stroke-width="2.2" fill="none"/><rect x="12" y="15" width="7" height="1.8" fill="#A8D4F4"/></svg>
<svg class="abs" style="left:180px;top:733px" width="33" height="30" viewBox="0 0 33 30">
<defs><linearGradient id="fe" x1="0" y1="0" x2="0" y2="1"><stop offset="0" stop-color="#FBEBB0"/><stop offset="1" stop-color="#E8C860"/></linearGradient></defs>
<path d="M1 3 L11 3 L13 5 L31 5 L31 25 L1 25z" fill="#E8C870"/><rect x="3" y="2" width="9" height="4" fill="#fff"/><rect x="4" y="2.5" width="3" height="2" fill="#2CB82C"/>
<rect x="12" y="4" width="8" height="4" fill="#fff"/><rect x="13" y="5" width="3" height="2" fill="#E03030"/><rect x="21" y="5" width="8" height="4" fill="#fff"/><rect x="22" y="6" width="3" height="2" fill="#2080E0"/>
<path d="M0.5 8 L32 8 L32 26 L0.5 26z" fill="url(#fe)" stroke="#D0B050" stroke-width="0.8"/>
<path d="M6 14 L27 14 L27 29 L21 29 L21 21 L12 21 L12 29 L6 29z" fill="#78C4EC" stroke="#3890C8" stroke-width="1"/><circle cx="8" cy="15" r="3" fill="#fff" opacity="0.9"/></svg>
<svg class="abs" style="left:230px;top:734px" width="30" height="25" viewBox="0 0 30 25" shape-rendering="crispEdges">
<rect x="0" y="0" width="30" height="25" fill="#505050"/><rect x="1" y="1" width="28" height="23" fill="#000"/><rect x="1" y="1" width="28" height="2" fill="#DDE2E8"/>
<rect x="22" y="1" width="1" height="1" fill="#4060A0"/><rect x="24" y="1" width="1" height="1" fill="#4060A0"/><rect x="26" y="1" width="1" height="1" fill="#4060A0"/>
<path d="M1 3h28v5 L1 16z" fill="#2A2A2A"/>
<path d="M4 6h3v1H4zM3 7h1v4H3zM4 11h3v1H4zM9 8h1v1H9zM9 10h1v1H9zM12 6h1v1h-1zM13 7h1v2h-1zM14 9h1v2h-1zM15 11h1v1h-1zM18 11h7v1h-7z" fill="#fff"/></svg>
<svg class="abs" style="left:278px;top:730px" width="38" height="34" viewBox="0 0 38 34">
<defs><linearGradient id="gr" x1="0" y1="0" x2="1" y2="1"><stop offset="0" stop-color="#E8F4FC"/><stop offset="0.5" stop-color="#A8D0F0"/><stop offset="1" stop-color="#5A90D0"/></linearGradient></defs>
<g transform="translate(14.5,13.5)"><path d="M-2 -13 L2 -13 L3 -9.5 L6.5 -11 L9 -8.5 L8 -5 L12 -4 L12 0 L12 3 L8.5 4.5 L10 8 L7.5 10.5 L4 9 L3 12.5 L-1 12.5 L-2.5 9 L-6 10.5 L-9 8 L-7.5 4.5 L-12 3 L-12 -1 L-8.5 -3 L-10 -7 L-7 -10 L-4 -8.5z" fill="url(#gr)" stroke="#7EA8D8" stroke-width="0.8"/><circle r="5.5" fill="#D4D0C8" stroke="#88AAD0" stroke-width="1"/></g>
<g transform="translate(27.5,25)"><path d="M-1.5 -7 L1.5 -7 L2 -5 L4.5 -6 L6 -4 L5 -2 L7 -1 L7 1.5 L5 2.5 L6 4.5 L4 6 L2 5 L1.5 7 L-1.5 7 L-2 5 L-4.5 6 L-6 4 L-5 2.5 L-7 1.5 L-7 -1 L-5 -2 L-6 -4 L-4 -6 L-2 -5z" fill="url(#gr)" stroke="#7EA8D8" stroke-width="0.6"/><circle r="3" fill="#D4D0C8" stroke="#88AAD0" stroke-width="0.8"/></g></svg>
<svg class="abs" style="left:327px;top:730px" width="33" height="34" viewBox="0 0 33 34">
<defs><linearGradient id="ie" x1="0" y1="0" x2="0.3" y2="1"><stop offset="0" stop-color="#1A5AB0"/><stop offset="0.55" stop-color="#2A90E0"/><stop offset="1" stop-color="#0E50A8"/></linearGradient></defs>
<path d="M4.5 17 A12 12 0 1 1 28.5 19 L12 19 Q12.5 24.5 17.5 24.5 Q21 24.5 22.5 22.5 L28 22.5 Q25.5 29.5 17 29.5 A12.5 12.5 0 0 1 4.5 17z M12 14.5 L22 14.5 Q21.5 10 17 10 Q12.5 10 12 14.5z" fill="url(#ie)" fill-rule="evenodd"/>
<path d="M12.5 14 Q13 10.5 17 10.5 Q21 10.5 21.5 14z" fill="#F4F4F4"/>
<path d="M2.5 31 Q-0.5 26 6 17 Q14 6 25 2.5 Q31 0.5 31 4 Q31 6.5 29 9" stroke="#F2B41C" stroke-width="2.2" fill="none"/><path d="M3 31.5 Q6 33 11 31" stroke="#F2B41C" stroke-width="1.8" fill="none"/></svg>
<svg class="abs" style="left:380px;top:733px" width="32" height="29" viewBox="0 0 32 29">
<rect x="1" y="6" width="7" height="16" rx="1" fill="#C8CCD0" stroke="#8A9096" stroke-width="0.8"/><rect x="2" y="8" width="3" height="2" fill="#3C3"/>
<path d="M8 1 L30 1 L30 19 L8 19z" fill="#D8DCE0" stroke="#A0A8B0" stroke-width="0.8"/><rect x="10" y="3" width="18" height="14" fill="#101810"/>
<path d="M10 13 L13 12 L15 6 L17 12 L19 9 L21 14 L23 7 L25 13 L28 11" stroke="#20E020" stroke-width="1.4" fill="none"/>
<path d="M10 9 H28 M10 5 H28" stroke="#2A4A2A" stroke-width="0.5"/>
<rect x="16" y="19" width="6" height="4" fill="#C0C4C8"/><ellipse cx="19" cy="25.5" rx="8" ry="3" fill="#D0D4D8" stroke="#A8B0B8" stroke-width="0.6"/></svg>
<svg class="abs" style="left:1177px;top:739px" width="17" height="16" viewBox="0 0 17 16">
<rect x="0.5" y="0.5" width="16" height="15" fill="#fff" stroke="#4A80D0" stroke-width="1"/><rect x="2" y="3" width="13" height="10" rx="1" fill="#3A78C8"/><rect x="3" y="5" width="11" height="7" fill="#C8D8F0"/>
<rect x="4" y="7" width="3" height="3" fill="#3A78C8"/><rect x="8" y="2" width="1.5" height="12" fill="#E8261C"/><rect x="12" y="2" width="1.5" height="12" fill="#E8261C"/></svg>
<svg class="abs" style="left:1260px;top:741px" width="16" height="13" viewBox="0 0 16 13">
<defs><linearGradient id="sd" x1="0" y1="0" x2="1" y2="1"><stop offset="0" stop-color="#1850B0"/><stop offset="1" stop-color="#40A0F0"/></linearGradient></defs>
<rect x="0" y="0" width="16" height="13" fill="#B8C8D8"/><rect x="1" y="1" width="14" height="9" fill="url(#sd)"/><rect x="1" y="10" width="14" height="2" fill="#203040"/><circle cx="3.5" cy="10.5" r="1.5" fill="#F0A020"/></svg>
</body></html>
